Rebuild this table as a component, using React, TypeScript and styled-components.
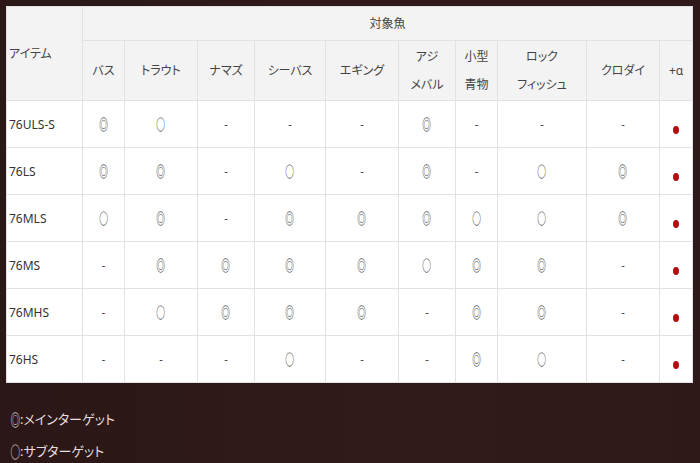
import styled, { createGlobalStyle } from 'styled-components';

const GlobalStyle = createGlobalStyle`
  html, body {
    margin: 0;
    padding: 0;
    background: #2d1818;
  }
`;

const Page = styled.div`
  width: 700px;
  height: 463px;
  box-sizing: border-box;
  padding: 6px 8px 0 6px;
  background: linear-gradient(90deg, #2b1717 0%, #311a1a 60%, #2e1818 100%);
  font-family: 'Noto Sans', 'Noto Sans CJK JP', sans-serif;
  font-feature-settings: 'palt';
  overflow: hidden;
`;

const Table = styled.table`
  width: 686px;
  table-layout: fixed;
  border-collapse: collapse;
  background: #fff;
  font-size: 12px;
  color: #333;
`;

const HeadCell = styled.th<{ $h?: number }>`
  height: ${(p) => p.$h ?? 59}px;
  padding: 0;
  background: #f3f3f3;
  border: 1px solid #e2e2e2;
  font-weight: normal;
  text-align: center;
  vertical-align: middle;
  color: #444;
  line-height: 28px;
`;

const ItemHead = styled(HeadCell)`
  text-align: left;
  padding-left: 2px;
`;

const Cell = styled.td`
  height: 46px;
  padding: 0;
  border: 1px solid #e2e2e2;
  text-align: center;
  vertical-align: middle;
  color: #444;
  line-height: 1;
`;

const ItemCell = styled(Cell)`
  text-align: left;
  padding-left: 2px;
  color: #333;
  line-height: normal;
`;

const Mark = styled.span<{ $main?: boolean }>`
  display: inline-block;
  font-family: 'Noto Sans CJK JP', sans-serif;
  font-size: 15px;
  font-weight: ${(p) => (p.$main ? 700 : 400)};
  line-height: 1;
  color: ${(p) => (p.$main ? '#555' : '#222')};
  transform: scaleX(0.58);
`;

const Dash = styled.span`
  font-size: 11px;
  color: #333;
`;

const Dot = styled.span`
  display: inline-block;
  width: 6px;
  height: 8px;
  border-radius: 50%;
  background: #b30d0d;
  vertical-align: -9px;
`;

const Legend = styled.div`
  padding-top: 20px;
  color: #e6dede;
  font-size: 13px;
  line-height: 32px;
`;

const LegendRow = styled.div`
  display: flex;
  align-items: center;
  padding-left: 2px;
`;

const LegendMark = styled.span<{ $main?: boolean }>`
  display: inline-block;
  width: 12px;
  text-align: center;
  font-family: 'Noto Sans CJK JP', sans-serif;
  font-size: 16px;
  font-weight: ${(p) => (p.$main ? 700 : 400)};
  transform: scaleX(0.6);
  color: ${(p) => (p.$main ? '#d6d0d0' : '#eee8e8')};
`;

const widths = [76, 42, 73, 57, 71, 73, 57, 42, 89, 73, 33];

const fish = ['バス', 'トラウト', 'ナマズ', 'シーバス', 'エギング', ['アジ', 'メバル'], ['小型', '青物'], ['ロック', 'フィッシュ'], 'クロダイ', '+α'];

type V = 'M' | 'S' | '-';

const rows: { name: string; v: V[] }[] = [
  { name: '76ULS-S', v: ['M', 'S', '-', '-', '-', 'M', '-', '-', '-'] },
  { name: '76LS', v: ['M', 'M', '-', 'S', '-', 'M', '-', 'S', 'M'] },
  { name: '76MLS', v: ['S', 'M', '-', 'M', 'M', 'M', 'S', 'S', 'M'] },
  { name: '76MS', v: ['-', 'M', 'M', 'M', 'M', 'S', 'M', 'M', '-'] },
  { name: '76MHS', v: ['-', 'S', 'M', 'M', 'M', '-', 'M', 'M', '-'] },
  { name: '76HS', v: ['-', '-', '-', 'S', '-', '-', 'M', 'S', '-'] },
];

function Value({ v }: { v: V }) {
  if (v === 'M') return <Mark $main>◎</Mark>;
  if (v === 'S') return <Mark>○</Mark>;
  return <Dash>-</Dash>;
}

export default function App() {
  return (
    <>
      <GlobalStyle />
      <Page>
        <Table>
          <colgroup>
            {widths.map((w, i) => (
              <col key={i} style={{ width: w }} />
            ))}
          </colgroup>
          <thead>
            <tr>
              <ItemHead rowSpan={2}>アイテム</ItemHead>
              <HeadCell colSpan={10} $h={33}>
                対象魚
              </HeadCell>
            </tr>
            <tr>
              {fish.map((f, i) => (
                <HeadCell key={i}>
                  {Array.isArray(f) ? (
                    <>
                      {f[0]}
                      <br />
                      {f[1]}
                    </>
                  ) : (
                    f
                  )}
                </HeadCell>
              ))}
            </tr>
          </thead>
          <tbody>
            {rows.map((r) => (
              <tr key={r.name}>
                <ItemCell>{r.name}</ItemCell>
                {r.v.map((v, i) => (
                  <Cell key={i}>
                    <Value v={v} />
                  </Cell>
                ))}
                <Cell>
                  <Dot />
                </Cell>
              </tr>
            ))}
          </tbody>
        </Table>
        <Legend>
          <LegendRow>
            <LegendMark $main>◎</LegendMark>:メインターゲット
          </LegendRow>
          <LegendRow>
            <LegendMark>○</LegendMark>:サブターゲット
          </LegendRow>
        </Legend>
      </Page>
    </>
  );
}
